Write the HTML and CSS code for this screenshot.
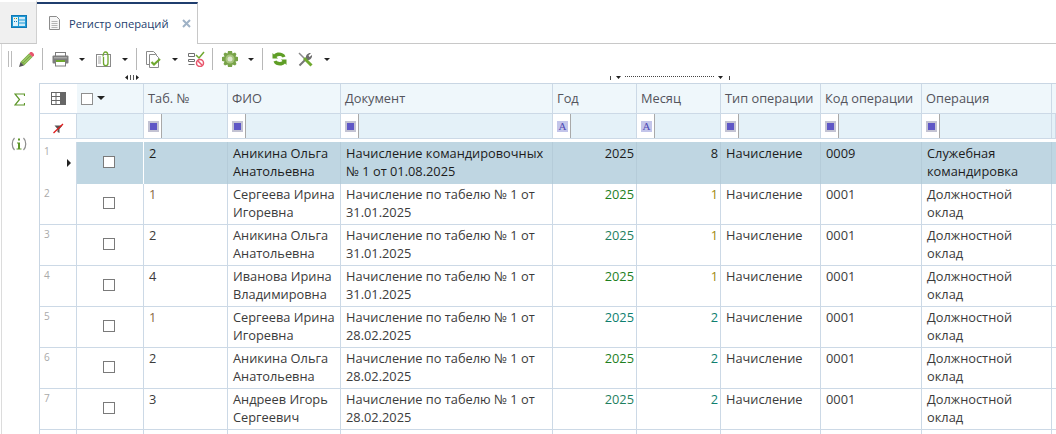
FILE: index.html
```html
<!DOCTYPE html>
<html lang="ru">
<head>
<meta charset="utf-8">
<title>Регистр операций</title>
<link rel="stylesheet" href="styles.css">
</head>
<body>
<div class="tabs">
  <div class="home">
    <svg width="16" height="13" viewBox="0 0 16 13"><rect x="0.5" y="0.5" width="15" height="12" fill="#1d9ad6" stroke="#1279b5"/><rect x="2" y="2" width="5" height="9" fill="#dff2fb"/><rect x="8" y="2" width="6" height="2.5" fill="#cfeaf7"/><rect x="8" y="5.5" width="6" height="2" fill="#cfeaf7"/><rect x="8" y="8.5" width="6" height="2.5" fill="#cfeaf7"/><rect x="3" y="3" width="1" height="1" fill="#e0861e"/><rect x="5" y="3" width="1" height="1" fill="#5ba32b"/><rect x="3" y="6" width="1" height="1" fill="#1279b5"/><rect x="5" y="6" width="1" height="1" fill="#1279b5"/></svg>
  </div>
  <div class="tab">
    <svg width="11" height="14" viewBox="0 0 11 14"><path d="M.5.5H7.5L10.5 3.5V13.5H.5Z" fill="#f7f7f7" stroke="#8c8c8c"/><path d="M2.5 5.5H8.5M2.5 7.5H8.5M2.5 9.5H8.5M2.5 11.5H8.5" stroke="#b5b5b5"/></svg>
    <span class="tab-title">Регистр операций</span>
    <svg class="tab-x" width="9" height="9" viewBox="0 0 9 9"><path d="M1 1L8 8M8 1L1 8" stroke="#9fb2c6" stroke-width="2"/></svg>
  </div>
  <div class="tab-rest"></div>
</div>

<div class="toolbar">
  <span class="grip"></span>
  <svg class="ic" width="15" height="15" viewBox="0 0 15 15"><path d="M1.5 10L10 1.5L13.5 5L5 13.5Z" fill="#79ad3f"/><path d="M3.5 10L10.5 3M5 11.5L12 4.5" stroke="#b9d78d"/><path d="M10 1.5L11.5 0H13L15 2V3.5L13.5 5Z" fill="#e8566f"/><path d="M1.5 10L5 13.5L0 15Z" fill="#555"/></svg>
  <span class="sep"></span>
  <svg class="ic" width="17" height="15" viewBox="0 0 17 15"><rect x="3.5" y=".5" width="10" height="4" fill="#fff" stroke="#7d7d7d"/><rect x=".5" y="3.5" width="16" height="8" rx="1" fill="#7d7d7d"/><rect x="2" y="5" width="13" height="1.5" fill="#a8a8a8"/><rect x="3.5" y="7.5" width="10" height="6.5" fill="#fff" stroke="#7d7d7d"/><rect x="4" y="8" width="9" height="2" fill="#6fa82f"/></svg>
  <i class="caret c10"></i>
  <svg class="ic ml11" width="15" height="16" viewBox="0 0 15 16"><rect x=".5" y="3.5" width="14" height="12" fill="#fff" stroke="#8a8a8a"/><path d="M2 6H5M2 8H5M2 10H5M2 12H5" stroke="#a5a5a5"/><path d="M7 5.5C7 -.5 12 -.5 12 5.5V12C12 15.5 7.5 15.5 7.5 12V6" fill="none" stroke="#6fa82f" stroke-width="1.3"/></svg>
  <i class="caret c11"></i>
  <span class="sep"></span>
  <svg class="ic" width="16" height="17" viewBox="0 0 16 17"><path d="M.5.5H7.5L10.5 3.5V13.5H.5Z" fill="#fff" stroke="#8a8a8a"/><path d="M3.5 3.5H9.5L12.5 6.5V16.5H3.5Z" fill="#fff" stroke="#8a8a8a"/><path d="M5.5 11L8 13.5L14 8" fill="none" stroke="#6fa82f" stroke-width="2.2"/></svg>
  <i class="caret c10"></i>
  <svg class="ic ml10" width="17" height="16" viewBox="0 0 17 16"><path d="M.5 2.5H6.5V5.500H.5ZM.5 8.5H6.5V10.500H.5ZM.5 13.500H6.5" fill="none" stroke="#6f6f6f"/><path d="M8 4L11 7L16 1" fill="none" stroke="#6fa82f" stroke-width="1.5"/><circle cx="12" cy="12" r="3.5" fill="#fff" stroke="#e9566c" stroke-width="1.5"/><path d="M9.5 9.5L14.5 14.5" stroke="#e9566c" stroke-width="1.5"/></svg>
  <span class="sep sep-n"></span>
  <svg class="ic" width="16" height="16" viewBox="0 0 16 16"><path d="M6 0H10L10.5 2.5L13 1.5L14.5 3L13.5 5.5L16 6V10L13.5 10.5L14.5 13L13 14.5L10.5 13.5L10 16H6L5.5 13.5L3 14.5L1.5 13L2.500 10.5L0 10V6L2.5 5.5L1.5 3L3 1.500L5.5 2.5Z" fill="#78a348"/><circle cx="8" cy="8" r="4.5" fill="#a6c47d"/><circle cx="8" cy="8" r="2.5" fill="#dfe8d0"/></svg>
  <i class="caret c10"></i>
  <span class="sep"></span>
  <svg class="ic" width="15" height="14" viewBox="0 0 15 14"><path d="M13.5 4.5C12.5 1.5 9.5 .5 7 .5C5 .5 3.5 1 2 2.5L.5 1V6.5H6L4.5 5C6 3.8 9 3.5 10.5 5.5Z" fill="#5f9e26"/><path d="M1.5 9.5C2.5 12.500 5.5 13.5 8 13.5C10 13.5 11.5 13 13 11.5L14.5 13V7.5H9L10.5 9C9 10.2 6 10.5 4.5 8.5Z" fill="#5f9e26"/></svg>
  <svg class="ic ml11" width="15" height="15" viewBox="0 0 15 15"><path d="M1.500 13.500L9 6" stroke="#777" stroke-width="2"/><path d="M8 6C7.500 3 10 .5 13 1L10.500 3.500L11.500 5L14 3C14.500 6 12 8.500 9 8Z" fill="#6d6d6d"/><path d="M1 1L6 6" stroke="#8a8a8a" stroke-width="1.500"/><path d="M6 6L13.500 13.500" stroke="#6fa82f" stroke-width="3"/></svg>
  <i class="caret c11"></i>
</div>

<div class="marks">
  <svg class="mark-a" width="14" height="5" viewBox="0 0 14 5"><path d="M3 0V5L0 2.5ZM11 0V5L14 2.5Z" fill="#222"/><path d="M5.5 0V5M8.5 0V5" stroke="#555"/></svg>
  <svg class="mark-b" width="120" height="4" viewBox="0 0 120 4"><path d="M.5 0V4M119.5 0V4" stroke="#444"/><path d="M6 0H11L8.5 3ZM108 0H113L110.5 3Z" fill="#222"/><path d="M15 .5H104" stroke="#444" stroke-dasharray="1 1"/></svg>
</div>

<div class="body">
  <aside class="side">
    <svg class="sum" width="11" height="13" viewBox="0 0 11 13"><path d="M10.5 3V1H1L5.5 6.5L1 12H10.5V10" fill="none" stroke="#5d9629" stroke-width="1.2"/></svg>
    <svg class="inf" width="16" height="14" viewBox="0 0 16 14"><path d="M3.5 1C.5 4 .5 10 3.5 13M12.5 1C15.5 4 15.5 10 12.5 13" fill="none" stroke="#8d8d8d" stroke-width="1.2"/><rect x="7" y="1.5" width="2" height="2" fill="#5d9629"/><path d="M6 5.5H9V11.5H10.5V12.5H5.5V11.5H7V6.5H6Z" fill="#5d9629"/></svg>
  </aside>

  <div class="table">
    <div class="row head">
      <div class="cell rh">
        <svg width="15" height="13" viewBox="0 0 15 13"><rect x=".5" y=".5" width="14" height="12" fill="#fff" stroke="#666"/><path d="M5 .5V12.5M9.5 .5V12.5M.5 4.5H10M.5 8.5H10" stroke="#666"/><rect x="10" y="1" width="5" height="12" fill="#666"/></svg>
      </div>
      <div class="cell sel"><span class="box box-h"></span><i class="caret caret-h"></i></div>
      <div class="cell">Таб. №</div>
      <div class="cell">ФИО</div>
      <div class="cell">Документ</div>
      <div class="cell">Год</div>
      <div class="cell">Месяц</div>
      <div class="cell">Тип операции</div>
      <div class="cell">Код операции</div>
      <div class="cell">Операция</div>
      <div class="cell"></div>
    </div>

    <div class="row filter">
      <div class="cell rh">
        <svg width="11" height="11" viewBox="0 0 11 11"><path d="M1.5 2.5H9.5L6.5 6V10L4.5 9V6Z" fill="#555"/><path d="M.5 10L10 1" stroke="#e01b1b" stroke-width="1.3"/></svg>
      </div>
      <div class="cell fsel"></div>
      <div class="cell"><span class="f"><i class="fi"></i></span></div>
      <div class="cell"><span class="f"><i class="fi"></i></span></div>
      <div class="cell"><span class="f"><i class="fi"></i></span></div>
      <div class="cell"><span class="f"><i class="fa">A</i></span></div>
      <div class="cell"><span class="f"><i class="fa">A</i></span></div>
      <div class="cell"><span class="f"><i class="fi"></i></span></div>
      <div class="cell"><span class="f"><i class="fi"></i></span></div>
      <div class="cell"><span class="f"><i class="fi"></i></span></div>
      <div class="cell"></div>
    </div>

    <div class="row data cur">
      <div class="cell rh"><span class="num">1</span><i class="arrow"></i></div>
      <div class="cell chk"><span class="box"></span></div>
      <div class="cell">2</div>
      <div class="cell">Аникина Ольга Анатольевна</div>
      <div class="cell">Начисление командировочных № 1 от 01.08.2025</div>
      <div class="cell r">2025</div>
      <div class="cell r">8</div>
      <div class="cell">Начисление</div>
      <div class="cell">0009</div>
      <div class="cell">Служебная командировка</div>
      <div class="cell"></div>
    </div>

    <div class="row data">
      <div class="cell rh"><span class="num">2</span></div>
      <div class="cell chk"><span class="box"></span></div>
      <div class="cell t-o">1</div>
      <div class="cell">Сергеева Ирина Игоревна</div>
      <div class="cell">Начисление по табелю № 1 от 31.01.2025</div>
      <div class="cell r t-g">2025</div>
      <div class="cell r t-y">1</div>
      <div class="cell">Начисление</div>
      <div class="cell">0001</div>
      <div class="cell">Должностной оклад</div>
      <div class="cell"></div>
    </div>

    <div class="row data">
      <div class="cell rh"><span class="num">3</span></div>
      <div class="cell chk"><span class="box"></span></div>
      <div class="cell">2</div>
      <div class="cell">Аникина Ольга Анатольевна</div>
      <div class="cell">Начисление по табелю № 1 от 31.01.2025</div>
      <div class="cell r t-g2">2025</div>
      <div class="cell r t-y">1</div>
      <div class="cell">Начисление</div>
      <div class="cell">0001</div>
      <div class="cell">Должностной оклад</div>
      <div class="cell"></div>
    </div>

    <div class="row data">
      <div class="cell rh"><span class="num">4</span></div>
      <div class="cell chk"><span class="box"></span></div>
      <div class="cell">4</div>
      <div class="cell">Иванова Ирина Владимировна</div>
      <div class="cell">Начисление по табелю № 1 от 31.01.2025</div>
      <div class="cell r t-g">2025</div>
      <div class="cell r t-y">1</div>
      <div class="cell">Начисление</div>
      <div class="cell">0001</div>
      <div class="cell">Должностной оклад</div>
      <div class="cell"></div>
    </div>

    <div class="row data">
      <div class="cell rh"><span class="num">5</span></div>
      <div class="cell chk"><span class="box"></span></div>
      <div class="cell t-o">1</div>
      <div class="cell">Сергеева Ирина Игоревна</div>
      <div class="cell">Начисление по табелю № 1 от 28.02.2025</div>
      <div class="cell r t-b">2025</div>
      <div class="cell r t-b">2</div>
      <div class="cell">Начисление</div>
      <div class="cell">0001</div>
      <div class="cell">Должностной оклад</div>
      <div class="cell"></div>
    </div>

    <div class="row data">
      <div class="cell rh"><span class="num">6</span></div>
      <div class="cell chk"><span class="box"></span></div>
      <div class="cell">2</div>
      <div class="cell">Аникина Ольга Анатольевна</div>
      <div class="cell">Начисление по табелю № 1 от 28.02.2025</div>
      <div class="cell r t-g">2025</div>
      <div class="cell r t-b">2</div>
      <div class="cell">Начисление</div>
      <div class="cell">0001</div>
      <div class="cell">Должностной оклад</div>
      <div class="cell"></div>
    </div>

    <div class="row data">
      <div class="cell rh"><span class="num">7</span></div>
      <div class="cell chk"><span class="box"></span></div>
      <div class="cell">3</div>
      <div class="cell">Андреев Игорь Сергеевич</div>
      <div class="cell">Начисление по табелю № 1 от 28.02.2025</div>
      <div class="cell r t-g2">2025</div>
      <div class="cell r t-b">2</div>
      <div class="cell">Начисление</div>
      <div class="cell">0001</div>
      <div class="cell">Должностной оклад</div>
      <div class="cell"></div>
    </div>

    <div class="row data stub">
      <div class="cell rh"></div><div class="cell"></div><div class="cell"></div><div class="cell"></div><div class="cell"></div><div class="cell"></div><div class="cell"></div><div class="cell"></div><div class="cell"></div><div class="cell"></div><div class="cell"></div>
    </div>
  </div>
</div>
</body>
</html>
```

FILE: styles.css
```css
* { box-sizing: border-box; }
html, body { margin: 0; height: 100%; overflow: hidden; }
body {
  background: #fff;
  color: #3b3b3b;
  font-family: "Open Sans", "Noto Sans", sans-serif;
  font-size: 12.8px;
}

/* tab strip */
.tabs { display: flex; height: 44px; }
.home {
  width: 37px;
  height: 44px;
  background: #f0f0f0;
  border-top: 2px solid #fff;
  border-bottom: 1px solid #c8c8c8;
  border-right: 1px solid #d0d0d0;
  display: flex;
  align-items: center;
  justify-content: center;
  padding: 0 0 3px 2px;
}
.tab {
  width: 161px;
  height: 42px;
  margin-top: 2px;
  border-top: 2px solid #1f3d6e;
  border-right: 1px solid #c8c8c8;
  display: flex;
  align-items: center;
  padding: 0 0 2px 12px;
}
.tab-title { color: #24406e; font-size: 11.2px; margin-left: 9px; white-space: nowrap; }
.tab-x { margin-left: 13px; }
.tab-rest { flex: 1; border-bottom: 1px solid #c8c8c8; }

/* toolbar */
.toolbar {
  display: flex;
  align-items: center;
  height: 28px;
  padding: 2px 0 0 6px;
  margin-left: 1px;
  border-left: 1px solid #dcdcdc;
}
.grip {
  width: 4px;
  height: 16px;
  border-left: 1px solid #bbb;
  border-right: 1px solid #bbb;
  margin-right: 7px;
}
.sep { width: 1px; height: 22px; background: #b8b8b8; margin: 0 9px 0 8px; flex: none; }
.sep-n { margin: 0 9px 0 7px; }
.ic { flex: none; }
.ml10 { margin-left: 10px; }
.ml11 { margin-left: 11px; }
.caret {
  width: 0;
  height: 0;
  border-left: 3px solid transparent;
  border-right: 3px solid transparent;
  border-top: 3px solid #222;
  flex: none;
  display: block;
}
.c10 { margin-left: 10px; }
.c11 { margin-left: 11px; }

/* little size markers */
.marks { height: 11px; position: relative; margin-left: 1px; border-left: 1px solid #dcdcdc; }
.mark-a { position: absolute; left: 123px; top: 3px; }
.mark-b { position: absolute; left: 608px; top: 4px; }

/* body */
.body { display: flex; height: 351px; overflow: hidden; }
.side {
  width: 38px;
  margin-left: 1px;
  border-left: 1px solid #dcdcdc;
  display: flex;
  flex-direction: column;
  align-items: center;
  padding: 10px 3px 0 0;
  flex: none;
}
.sum { display: block; }
.inf { display: block; margin-top: 31px; }

/* grid */
.table { flex: 1; height: 351px; overflow: hidden; border-top: 1px solid #c9d6e3; border-left: 1px solid #c9d6e3; }
.row {
  display: grid;
  grid-template-columns: 37px 67px 84px 113px 212px 84px 84px 100px 101px 130px 1fr;
}
.cell { border-right: 1px solid #ccd9e6; min-width: 0; }
.head { height: 30px; background: #eff7fb; border-bottom: 1px solid #ccd9e6; }
.head .cell { padding: 5px 0 0 4px; color: #54545c; white-space: nowrap; }
.head .rh { background: #fff; border-right: 0; padding: 7px 0 0 11px; }
.head .sel { display: flex; align-items: flex-start; padding: 9px 0 0 4px; }
.box { display: block; width: 12px; height: 12px; background: #fff; border: 1px solid #7a7a7a; }
.box-h { border-color: #8f8f8f; }
.caret-h { margin: 3px 0 0 4px; border-left-width: 4px; border-right-width: 4px; border-top-width: 4px; }

.filter { height: 25px; background: #e4f1f8; border-bottom: 1px solid #ccd9e6; }
.filter .rh { background: #fff; border-right: 1px solid #ccd9e6; padding: 6px 0 0 13px; }
.f {
  display: flex;
  align-items: center;
  justify-content: center;
  width: 18px;
  height: 24px;
  padding-left: 2px;
  background: #fff;
  border-right: 1px solid #a9a9a9;
}
.fi {
  display: block;
  width: 11px;
  height: 11px;
  background: #5f57c6;
  border: 2px solid #c3c3d3;
}
.fa {
  display: block;
  width: 11px;
  height: 11px;
  background: #c3c5ea;
  color: #4d49b5;
  font-style: normal;
  font-family: "Liberation Serif", serif;
  font-size: 11px;
  line-height: 11px;
  text-align: center;
}

.data { height: 41px; border-bottom: 1px solid #ccd9e6; }
.data .cell { padding: 1px 0 0 5px; line-height: 18px; }
.data .r { text-align: right; padding-right: 2px; }
.data .rh { position: relative; padding: 0; }
.num { position: absolute; left: 4px; top: 3px; color: #a9a9a9; font-size: 10px; line-height: 12px; }
.arrow {
  position: absolute;
  left: 27px;
  top: 17px;
  width: 0;
  height: 0;
  border-top: 4px solid transparent;
  border-bottom: 4px solid transparent;
  border-left: 4px solid #222;
}
.data .chk { display: flex; justify-content: center; padding: 13px 2px 0 0; }
.cur { height: 42px; margin-top: 3px; border-bottom: 0; background: #bfd6e2; color: #1c1c1c; }
.cur .cell { padding-top: 2px; border-right-color: #b5ccd9; }
.cur .chk { padding-top: 14px; }
.cur .rh { background: #fff; border-right: 1px solid #ccd9e6; }
.cur .cell:nth-child(2) { border-right: 1px solid #fff; }
.t-g { color: #1f7f1f; }
.t-g2 { color: #1f7f5f; }
.t-b { color: #0f7f6f; }
.t-y { color: #a08a10; }
.t-o { color: #8a6a45; }
```
